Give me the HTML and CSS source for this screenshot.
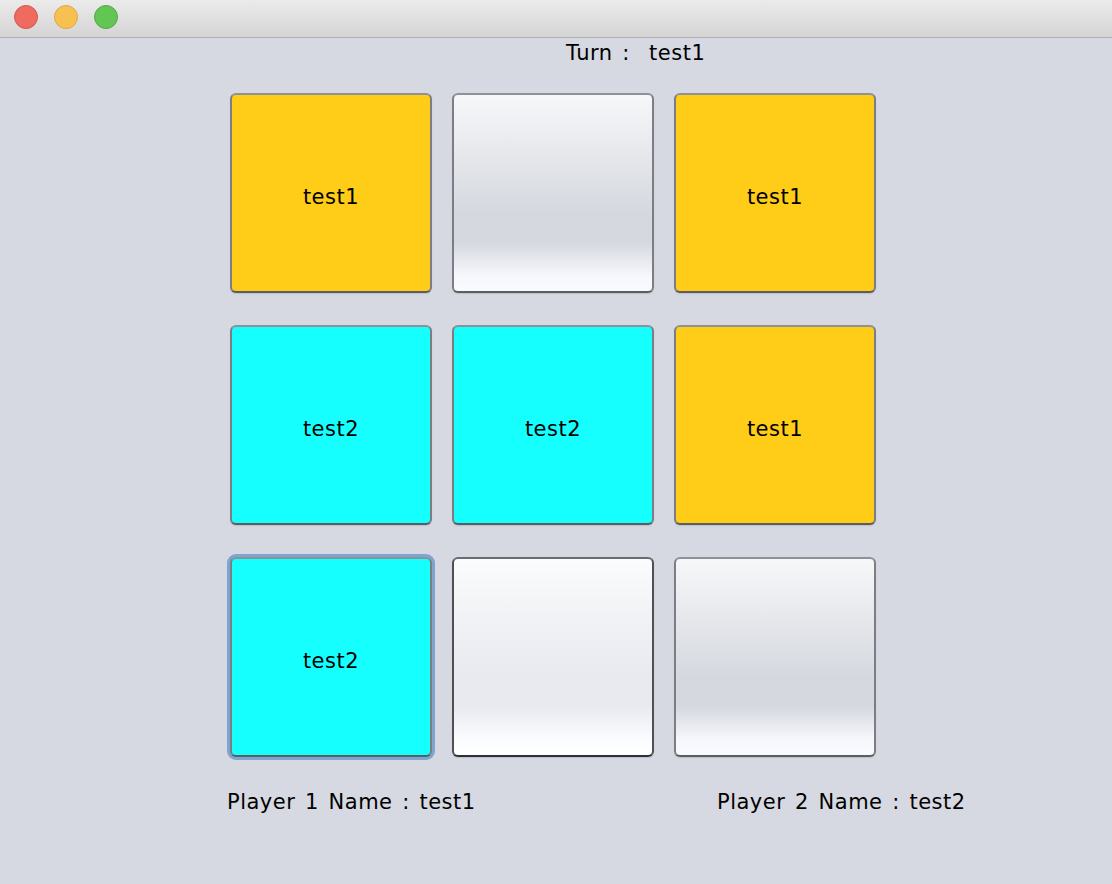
FILE: index.html
```html
<!DOCTYPE html>
<html>
<head>
<meta charset="utf-8">
<link rel="stylesheet" href="styles.css">
</head>
<body>
<div class="window">
  <div class="titlebar">
    <span class="light red"></span>
    <span class="light yellow"></span>
    <span class="light green"></span>
  </div>
  <div class="turn">Turn :&nbsp; test1</div>
  <div class="board">
    <div class="cell p1">test1</div>
    <div class="cell empty"></div>
    <div class="cell p1">test1</div>
    <div class="cell p2">test2</div>
    <div class="cell p2">test2</div>
    <div class="cell p1">test1</div>
    <div class="cell p2 focused">test2</div>
    <div class="cell empty pressed"></div>
    <div class="cell empty"></div>
  </div>
  <div class="players">
    <div class="player one">Player 1 Name : test1</div>
    <div class="player two">Player 2 Name : test2</div>
  </div>
</div>
</body>
</html>
```
FILE: styles.css
```css
html, body {
  margin: 0;
  padding: 0;
  background: #d6d9e1;
}
.window {
  width: 1112px;
  height: 884px;
  display: flex;
  flex-direction: column;
  font-family: "DejaVu Sans", "Liberation Sans", sans-serif;
  color: #000;
  letter-spacing: 0.5px;
  word-spacing: 2.5px;
}
.titlebar {
  height: 37px;
  border-bottom: 1px solid #b1b1b1;
  background: linear-gradient(#ebebeb, #d4d4d4);
  display: flex;
  align-items: center;
  gap: 16px;
  padding-left: 14px;
  box-sizing: content-box;
}
.light {
  width: 24px;
  height: 24px;
  border-radius: 50%;
  box-sizing: border-box;
  margin-top: -4px;
}
.light.red { background: #ef6a5f; border: 1px solid #d9544a; }
.light.yellow { background: #f6c151; border: 1px solid #dea93b; }
.light.green { background: #63c554; border: 1px solid #4fab42; }
.turn {
  padding-left: 566px;
  margin-top: 3px;
  font-size: 21px;
  line-height: 24px;
  height: 24px;
}
.board {
  display: grid;
  grid-template-columns: repeat(3, 202px);
  grid-auto-rows: 200px;
  column-gap: 20px;
  row-gap: 32px;
  margin-left: 230px;
  margin-top: 28px;
}
.cell {
  box-sizing: border-box;
  border: 2px solid;
  border-color: #8f9196 #7c7e83 #5c5d61 #7c7e83;
  border-radius: 6px;
  display: flex;
  align-items: center;
  justify-content: center;
  font-size: 21px;
  padding-top: 7px;
  box-shadow: 0 1px 1px rgba(0,0,0,0.12);
}
.cell.p1 { background: #ffcc17; }
.cell.p2 { background: #15ffff; }
.cell.empty {
  background: linear-gradient(#f6f7f9 0%, #e6e8ec 30%, #d5d8df 60%, #d5d8df 75%, #f5f7fc 92%, #f9fbff 100%);
}
.cell.empty.pressed {
  background: linear-gradient(#fbfcfd 0%, #f1f2f5 30%, #e8eaf0 60%, #e8eaf0 75%, #fbfcff 92%, #ffffff 100%);
  border-color: #6a6c70 #4f5054 #2f3034 #4f5054;
}
.cell.focused {
  box-shadow: 0 0 0 3px #7fa4cf;
}
.players {
  display: flex;
  margin-top: 33px;
  font-size: 21px;
  line-height: 24px;
}
.player.one { margin-left: 227px; width: 490px; }
```
